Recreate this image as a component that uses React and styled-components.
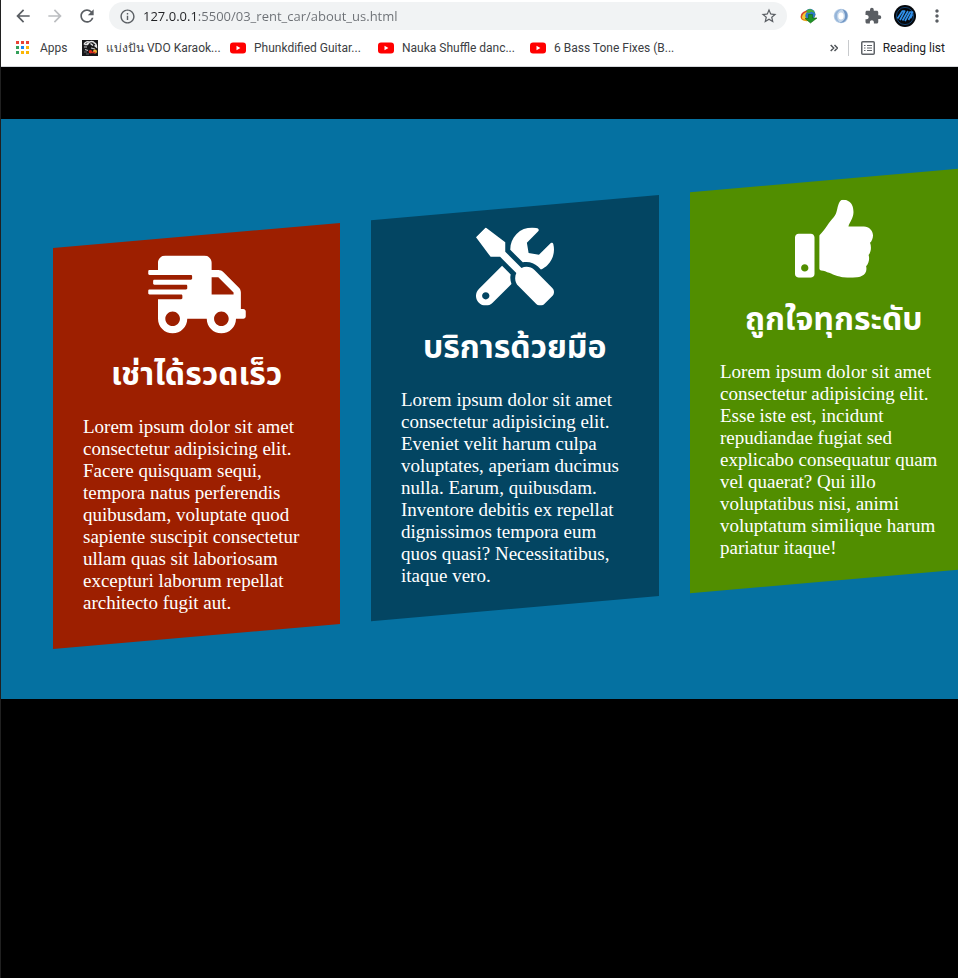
import React from "react";
import styled, { createGlobalStyle } from "styled-components";
import { FaShippingFast, FaTools, FaThumbsUp } from "react-icons/fa";
import {
  MdArrowBack,
  MdArrowForward,
  MdRefresh,
  MdInfoOutline,
  MdStarBorder,
  MdExtension,
  MdMoreVert,
} from "react-icons/md";

const GlobalStyle = createGlobalStyle`
  *, *::before, *::after { box-sizing: border-box; }
  body { margin: 0; background: #000; }
`;

const uiFont = `Roboto, "Noto Sans", sans-serif`;

const Window = styled.div`
  min-height: 100vh;
  border-left: 1px solid #202020;
  background: #000;
  overflow-x: hidden;
`;

const BrowserChrome = styled.header`
  height: 67px;
  background: #fff;
  border-bottom: 1px solid #d5d8dc;
  font-family: ${uiFont};
`;

const Toolbar = styled.div`
  display: flex;
  align-items: center;
  height: 32px;
  padding: 0 5px 0 6px;
`;

const ToolButton = styled.button`
  display: flex;
  align-items: center;
  justify-content: center;
  flex: none;
  width: 32px;
  height: 28px;
  padding: 0;
  border: 0;
  background: none;
  color: ${(p) => (p.disabled ? "#bcbec1" : "#5a5e63")};
`;

const AddressBar = styled.form`
  display: flex;
  align-items: center;
  flex: 1;
  min-width: 0;
  height: 28px;
  margin: 0 6px;
  padding: 0 2px;
  border-radius: 14px;
  background: #f1f3f4;
`;

const AddressInput = styled.input`
  flex: 1;
  min-width: 0;
  height: 28px;
  padding: 0;
  border: 0;
  outline: 0;
  background: linear-gradient(to right, #202124 54px, #6b6f74 54px);
  background-clip: text;
  -webkit-background-clip: text;
  color: transparent;
  font: 13px/28px "Open Sans", sans-serif;
`;

const Bookmarks = styled.nav`
  display: flex;
  align-items: center;
  height: 32px;
  padding: 0 13px 0 15px;
`;

const Bookmark = styled.a`
  display: flex;
  align-items: center;
  flex: none;
  gap: 8px;
  width: ${(p) => p.$width}px;
  color: #3c4043;
  font: 12px/16px ${uiFont};
  white-space: nowrap;
  text-decoration: none;
`;

const BookmarkTail = styled.div`
  display: flex;
  align-items: center;
  gap: 10px;
  margin-left: auto;
`;

const OverflowButton = styled.button`
  display: flex;
  padding: 0;
  border: 0;
  background: none;
`;

const Divider = styled.span`
  width: 1px;
  height: 16px;
  background: #c8cacd;
`;

const ReadingList = styled.button`
  display: flex;
  align-items: center;
  gap: 8px;
  padding: 0 0 0 2px;
  border: 0;
  background: none;
  color: #202124;
  font: 12px/16px ${uiFont};
  white-space: nowrap;
`;

const SiteHeader = styled.div`
  height: 52px;
`;

const Features = styled.section`
  padding: 129px 0 50px 52px;
  background: #0571a1;
  overflow: hidden;
`;

const SlantedRow = styled.div`
  display: flex;
  gap: 31px;
  transform: skewY(-5deg);
  transform-origin: left top;
`;

const Card = styled.article`
  flex: none;
  width: 30vw;
  padding: 20px 30px 22px;
  background: ${(p) => p.$color};
`;

const CardContent = styled.div`
  transform: skewY(5deg);
  color: #fff;
  font: 19px/22px "Liberation Serif", "Times New Roman", serif;
  text-align: center;
`;

const IconBox = styled.div`
  display: flex;
  justify-content: center;

  svg {
    width: ${(p) => (p.$wide ? 98 : 78)}px;
    height: 78px;
  }
`;

const CardTitle = styled.h2`
  margin: 24px 0 23px;
  font: bold 32px/36px "Noto Sans Thai", "Noto Sans", "Open Sans", sans-serif;
  white-space: nowrap;
`;

const CardText = styled.p`
  margin: 0;
  text-align: left;
`;

const AppsIcon = () => (
  <svg width="16" height="16" viewBox="0 0 16 16" aria-hidden="true">
    {["#ea4335", "#ea4335", "#ea4335", "#34a05a", "#1a87f0", "#fbb605", "#34a05a", "#fbb605", "#fbb605"].map((c, i) => (
      <rect key={i} x={(i % 3) * 5} y={1 + Math.floor(i / 3) * 5} width="3" height="3" fill={c} />
    ))}
  </svg>
);

const YouTubeIcon = () => (
  <svg width="16" height="16" viewBox="0 0 16 16" aria-hidden="true">
    <rect y="2.4" width="16" height="11.2" rx="3" fill="#f00" />
    <path d="M6.5 5.8v4.4L10.4 8z" fill="#fff" />
  </svg>
);

const KaraokeIcon = () => (
  <svg width="16" height="16" viewBox="0 0 16 16" aria-hidden="true">
    <rect width="16" height="16" fill="#17171a" />
    <path d="M2 4.500C3 1.500 6 1.200 7.500 2L5.500 4.500H2.500M5 4c2-2.500 5-2.800 7-1.800M8.500 3.500l2.500 2M11.500 2.500c2 .5 3 2 3 4.500l-2-1.500" fill="none" stroke="#e6e6e8" strokeWidth="1.400" />
    <path d="M2 7h3M3 9.500l3 1M9 8l4 1" stroke="#c8c8cc" strokeWidth="1.200" />
    <path d="M2 12h3M4 14h3" stroke="#65676a" />
    <circle cx="8.500" cy="11.800" r="1.800" fill="#e52b20" />
    <circle cx="13" cy="11.500" r="2" fill="#f2b632" />
    <path d="M9.500 12.500h4" stroke="#d42b20" strokeWidth="1.500" />
  </svg>
);

const DownloaderIcon = () => (
  <svg width="18" height="16" viewBox="0 0 18 16" aria-hidden="true">
    <ellipse cx="8" cy="8" rx="7.5" ry="5" fill="#e9a51b" transform="rotate(-15 8 8)" />
    <circle cx="10" cy="6.200" r="5.400" fill="#2c78c8" />
    <path d="M5.500 4.500c1-3 4-3.700 6-2.700 2 .5 3 1.700 3 3.200l-3-1.500-2 1.500-3-.5z" fill="#4caf35" />
    <path d="M.8 9C.6 5 4 2.600 7.500 2.800 5 5 4 8 5 11.500 2.500 12 1 11 .8 9z" fill="#d84a25" />
    <path d="M2 9.800C2 6.500 4.500 4.500 6.800 4 5 6.500 4.700 9 5.700 11.200 4 12 2.300 11.300 2 9.800z" fill="#f4cd32" />
    <path d="M8.500 6.500h4V10H17l-6.500 5L5 10.500h3.500z" fill="#219427" stroke="#116516" strokeWidth=".6" />
  </svg>
);

const SwirlIcon = () => (
  <svg width="16" height="16" viewBox="0 0 16 16" aria-hidden="true">
    <circle cx="8" cy="8" r="7.3" fill="#c2d5ea" />
    <path d="M9 1.200c5 .4 7 6 4.600 10-1.800 3-4.600 4-7 3.300 4-1 6-4 5.400-7.500C11.600 4.500 10.500 2.500 9 1.200z" fill="#7096c4" />
    <path d="M7 14.500C2 13.500.2 8.700 2.400 4.800 3.900 2.300 6.400 1 9 1.400 5.500 2.500 3.800 5 4 8.300c.1 2.700 1.300 4.900 3 6.200z" fill="#96b5d9" />
    <ellipse cx="8" cy="8" rx="2.700" ry="3.600" fill="#fff" />
  </svg>
);

const AvatarIcon = () => (
  <svg width="22" height="22" viewBox="0 0 22 22" fill="none" strokeLinejoin="round" aria-hidden="true">
    <circle cx="11" cy="11" r="11" fill="#05080c" />
    <circle cx="11" cy="11" r="8.600" stroke="#174f86" strokeWidth=".8" />
    <path d="M3.500 13.500L8.500 6h2.200L6 15M8.500 15.500L14 6M11 16l5-9h2.500l-4 8M16.500 13l2-4" stroke="#3190ea" strokeWidth="1.700" />
  </svg>
);

const ChevronsIcon = () => (
  <svg width="8" height="8" viewBox="0 0 8 8" fill="none" stroke="#505459" strokeWidth="1.500" aria-hidden="true">
    <path d="M.7 1l3 3-3 3M4.500 1l3 3-3 3" />
  </svg>
);

const ListIcon = () => (
  <svg width="14" height="14" viewBox="0 0 14 14" fill="none" stroke="#5f6368" aria-hidden="true">
    <rect x=".75" y=".75" width="12.500" height="12.500" rx="1" strokeWidth="1.500" />
    <path d="M3 4.500h1.500M3 7h1.500M3 9.500h1.500M6 4.500h5M6 7h5M6 9.500h5" strokeWidth="1.200" />
  </svg>
);

const bookmarks = [
  { label: "Apps", icon: AppsIcon, width: 66 },
  { label: "แบ่งปัน VDO Karaok...", icon: KaraokeIcon, width: 148 },
  { label: "Phunkdified Guitar...", icon: YouTubeIcon, width: 148 },
  { label: "Nauka Shuffle danc...", icon: YouTubeIcon, width: 152 },
  { label: "6 Bass Tone Fixes (B...", icon: YouTubeIcon, width: 148 },
];

const cards = [
  {
    title: "เช่าได้รวดเร็ว",
    color: "#9d1f00",
    icon: FaShippingFast,
    wide: true,
    text: "Lorem ipsum dolor sit amet consectetur adipisicing elit. Facere quisquam sequi, tempora natus perferendis quibusdam, voluptate quod sapiente suscipit consectetur ullam quas sit laboriosam excepturi laborum repellat architecto fugit aut.",
  },
  {
    title: "บริการด้วยมือ",
    color: "#034562",
    icon: FaTools,
    text: "Lorem ipsum dolor sit amet consectetur adipisicing elit. Eveniet velit harum culpa voluptates, aperiam ducimus nulla. Earum, quibusdam. Inventore debitis ex repellat dignissimos tempora eum quos quasi? Necessitatibus, itaque vero.",
  },
  {
    title: "ถูกใจทุกระดับ",
    color: "#518e00",
    icon: FaThumbsUp,
    text: "Lorem ipsum dolor sit amet consectetur adipisicing elit. Esse iste est, incidunt repudiandae fugiat sed explicabo consequatur quam vel quaerat? Qui illo voluptatibus nisi, animi voluptatum similique harum pariatur itaque!",
  },
];

export default function App() {
  return (
    <Window>
      <GlobalStyle />
      <BrowserChrome>
        <Toolbar>
          <ToolButton aria-label="Back"><MdArrowBack size={20} /></ToolButton>
          <ToolButton aria-label="Forward" disabled><MdArrowForward size={20} /></ToolButton>
          <ToolButton aria-label="Reload"><MdRefresh size={20} /></ToolButton>
          <AddressBar onSubmit={(e) => e.preventDefault()}>
            <ToolButton type="button" aria-label="Site information"><MdInfoOutline size={17} /></ToolButton>
            <AddressInput aria-label="Address" defaultValue="127.0.0.1:5500/03_rent_car/about_us.html" />
            <ToolButton type="button" aria-label="Bookmark this page"><MdStarBorder size={18} /></ToolButton>
          </AddressBar>
          <ToolButton aria-label="Download manager"><DownloaderIcon /></ToolButton>
          <ToolButton aria-label="Swirl extension"><SwirlIcon /></ToolButton>
          <ToolButton aria-label="Extensions"><MdExtension size={18} /></ToolButton>
          <ToolButton aria-label="Profile"><AvatarIcon /></ToolButton>
          <ToolButton aria-label="Menu"><MdMoreVert size={20} /></ToolButton>
        </Toolbar>
        <Bookmarks aria-label="Bookmarks">
          {bookmarks.map(({ label, icon: Icon, width }) => (
            <Bookmark key={label} href="#" $width={width}>
              <Icon />
              {label}
            </Bookmark>
          ))}
          <BookmarkTail>
            <OverflowButton aria-label="More bookmarks"><ChevronsIcon /></OverflowButton>
            <Divider />
            <ReadingList><ListIcon />Reading list</ReadingList>
          </BookmarkTail>
        </Bookmarks>
      </BrowserChrome>
      <SiteHeader />
      <Features>
        <SlantedRow>
          {cards.map(({ title, color, icon: Icon, wide, text }) => (
            <Card key={title} $color={color}>
              <CardContent>
                <IconBox $wide={wide}><Icon /></IconBox>
                <CardTitle>{title}</CardTitle>
                <CardText>{text}</CardText>
              </CardContent>
            </Card>
          ))}
        </SlantedRow>
      </Features>
    </Window>
  );
}
